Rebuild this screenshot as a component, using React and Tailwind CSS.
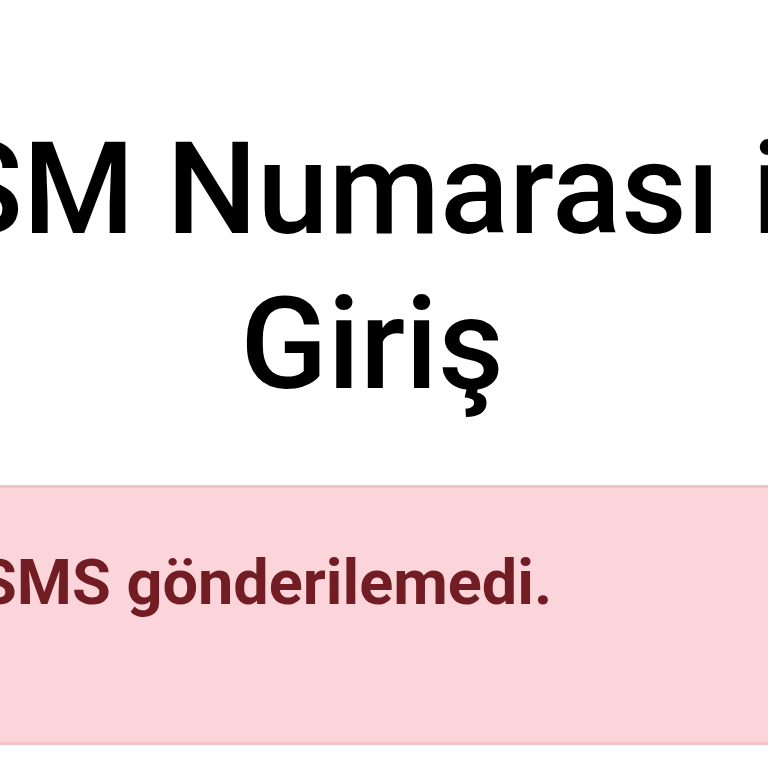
export default function App() {
  return (
    <div className="w-[768px] h-[768px] overflow-hidden bg-white" style={{ fontFamily: 'Roboto, "Noto Sans", sans-serif' }}>
      <div className="ml-[-328px] w-[1400px] pt-[112px]">
        <h1 className="text-center text-[128px] leading-[155px] font-medium text-black whitespace-nowrap">
          GSM Numarası ile
          <br />
          Giriş
        </h1>
      </div>
      <div className="mt-[63px] ml-[-60px] w-[900px] h-[260px] border-y-[3px] border-[#f0c4c8] bg-[#fbd5d9] pt-[63px] pl-[38px]">
        <p className="text-[63px] leading-none font-bold text-[#721c24] whitespace-nowrap">SMS gönderilemedi.</p>
      </div>
    </div>
  );
}
